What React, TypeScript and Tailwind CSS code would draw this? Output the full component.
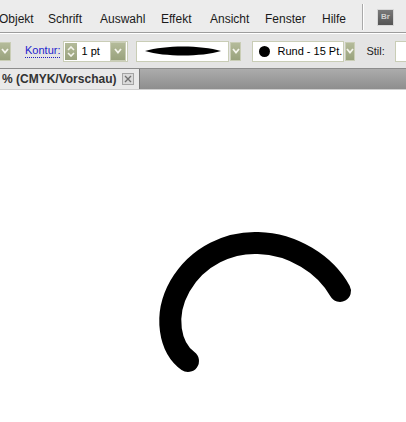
import React from "react"

function GreenArrow({ w = "w-[12px]" }: { w?: string }) {
  return (
    <div className={`${w} flex h-[19px] shrink-0 items-center justify-center border border-[#c9cdb6] bg-gradient-to-b from-[#b4bb9a] to-[#99a27d]`}>
      <svg width="8" height="6" viewBox="0 0 8 6">
        <path d="M1 1 L4 4.5 L7 1" fill="none" stroke="#f4f4ec" strokeWidth="1.8" />
      </svg>
    </div>
  )
}

function Spinner() {
  return (
    <div className="flex h-[17px] w-[12px] shrink-0 flex-col items-center justify-center gap-[1px] bg-gradient-to-b from-[#b4bb9a] to-[#99a27d]">
      <svg width="8" height="5" viewBox="0 0 8 5">
        <path d="M1 4 L4 1 L7 4" fill="none" stroke="#f4f4ec" strokeWidth="1.6" />
      </svg>
      <svg width="8" height="5" viewBox="0 0 8 5">
        <path d="M1 1 L4 4 L7 1" fill="none" stroke="#f4f4ec" strokeWidth="1.6" />
      </svg>
    </div>
  )
}

const menu = [
  { t: "Objekt", w: "w-[49px]" },
  { t: "Schrift", w: "w-[52px]" },
  { t: "Auswahl", w: "w-[61px]" },
  { t: "Effekt", w: "w-[49px]" },
  { t: "Ansicht", w: "w-[55px]" },
  { t: "Fenster", w: "w-[57px]" },
  { t: "Hilfe", w: "w-[40px]" },
]

export default function App() {
  return (
    <div className="flex h-[422px] w-[406px] flex-col overflow-hidden bg-white font-['Liberation_Sans',Arial,sans-serif]">
      {/* menu bar */}
      <div className="flex h-[32px] shrink-0 items-center bg-[#ececec] text-[12px] text-[#1a1a1a]">
        <div className="-ml-[1px] flex pt-[6px]">
          {menu.map((m) => (
            <span key={m.t} className={`${m.w} shrink-0`}>
              {m.t}
            </span>
          ))}
        </div>
        <div className="mt-[2px] h-[26px] w-[2px] shrink-0 border-r border-white bg-[#a9a9a9]" />
        <div className="ml-[13px] mt-[2px] flex h-[17px] w-[17px] shrink-0 items-center justify-center border border-[#d8d8d8] bg-gradient-to-b from-[#7a7a7a] to-[#555] text-[8px] font-bold text-[#d0d0d0]">
          Br
        </div>
      </div>
      <div className="h-[2px] shrink-0 border-b border-white bg-[#9c9c9c]" />

      {/* control bar */}
      <div className="flex h-[34px] shrink-0 items-center whitespace-nowrap bg-[#e4e4e4] text-[11px] text-black">
        <div className="-ml-[1px] shrink-0">
          <GreenArrow />
        </div>
        <span className="ml-[14px] shrink-0 border-b border-dotted border-[#2020c0] leading-[13px] text-[#1c1ccc]">Kontur:</span>
        <div className="ml-[3px] flex h-[21px] w-[65px] shrink-0 items-center border border-[#c9cdb6] bg-white pl-[1px]">
          <Spinner />
          <span className="ml-[4px]">1 pt</span>
        </div>
        <div className="-ml-[18px] shrink-0">
          <GreenArrow w="w-[16px]" />
        </div>
        <div className="ml-[10px] flex h-[21px] w-[93px] shrink-0 items-center justify-center border border-[#c9cdb6] bg-white">
          <svg width="76" height="12" viewBox="0 0 76 12">
            <path d="M0 6 C 20 0 56 0 76 6 C 56 12 20 12 0 6 Z" fill="#000" />
          </svg>
        </div>
        <div className="ml-[1px] shrink-0">
          <GreenArrow w="w-[11px]" />
        </div>
        <div className="ml-[11px] flex h-[21px] w-[92px] shrink-0 items-center border border-[#c9cdb6] bg-white">
          <div className="ml-[6px] h-[11px] w-[11px] shrink-0 rounded-full bg-black" />
          <span className="ml-[7px]">Rund - 15 Pt.</span>
        </div>
        <div className="ml-[1px] shrink-0">
          <GreenArrow w="w-[10px]" />
        </div>
        <span className="ml-[11px] shrink-0 text-[#222]">Stil:</span>
        <div className="ml-[10px] h-[21px] w-[30px] shrink-0 border border-[#c9cdb6] bg-white" />
      </div>
      <div className="h-[1px] shrink-0 bg-[#8c8c8c]" />

      {/* tab row */}
      <div className="flex h-[20px] shrink-0 bg-gradient-to-b from-[#acacac] to-[#8e8e8e]">
        <div className="flex w-[140px] shrink-0 items-center whitespace-nowrap border-r border-[#7a7a7a] bg-[#e9e9e9] text-[12px] font-bold text-[#333]">
          <span className="ml-[2px]">% (CMYK/Vorschau)</span>
          <div className="ml-[6px] flex h-[12px] w-[12px] shrink-0 items-center justify-center border border-[#a4a4a4] bg-[#dadada]">
            <svg width="8" height="8" viewBox="0 0 8 8">
              <path d="M1 1 L7 7 M7 1 L1 7" stroke="#707070" strokeWidth="1.4" />
            </svg>
          </div>
        </div>
      </div>
      <div className="h-[1px] shrink-0 bg-[#d0d0d0]" />

      {/* canvas */}
      <div className="relative flex-1 bg-white">
        <svg className="absolute left-0 top-0" width="406" height="334" viewBox="0 88 406 334">
          <path
            d="M188 359 C 170 346 163 314 180 284 C 198 253 230 240 258 241 C 293 242 325 262 340 289"
            fill="none"
            stroke="#000"
            strokeWidth="22"
            strokeLinecap="round"
          />
        </svg>
      </div>
    </div>
  )
}
